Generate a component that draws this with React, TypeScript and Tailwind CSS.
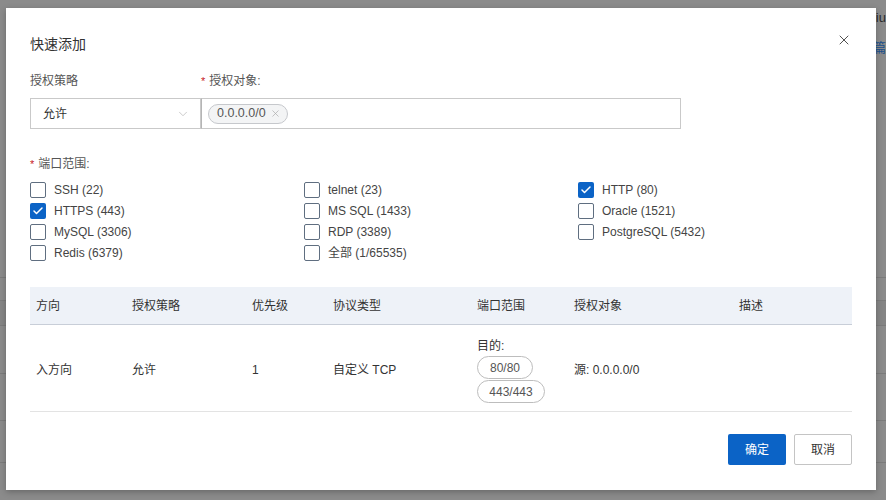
import { X, ChevronDown, Check } from "lucide-react";

const font = { fontFamily: '"Liberation Sans", "Noto Sans CJK SC", sans-serif' };

const ports: { label: string; checked?: boolean }[][] = [
  [{ label: "SSH (22)" }, { label: "telnet (23)" }, { label: "HTTP (80)", checked: true }],
  [{ label: "HTTPS (443)", checked: true }, { label: "MS SQL (1433)" }, { label: "Oracle (1521)" }],
  [{ label: "MySQL (3306)" }, { label: "RDP (3389)" }, { label: "PostgreSQL (5432)" }],
  [{ label: "Redis (6379)" }, { label: "全部 (1/65535)" }],
];

const cols = [
  { title: "方向", w: "w-[96px]" },
  { title: "授权策略", w: "w-[120px]" },
  { title: "优先级", w: "w-[81px]" },
  { title: "协议类型", w: "w-[144px]" },
  { title: "端口范围", w: "w-[97px]" },
  { title: "授权对象", w: "w-[165px]" },
  { title: "描述", w: "flex-1" },
];

function Box({ checked }: { checked?: boolean }) {
  return checked ? (
    <span className="w-[16px] h-[16px] rounded-[2px] bg-[#0b63c6] flex items-center justify-center">
      <Check className="w-[12px] h-[12px] text-white" strokeWidth={3} />
    </span>
  ) : (
    <span className="w-[16px] h-[16px] rounded-[2px] border border-[#5f6e80] bg-white" />
  );
}

function Backdrop() {
  // the page behind the dimmed overlay
  return (
    <div className="w-full h-full flex flex-col">
      <div className="h-[277px]" />
      {[23, 25, 48, 47, 42, 38].map((h, i) => (
        <div key={i} className={`border-t border-[#7b7b7b] ${i === 1 ? "bg-[#858585]" : ""}`} style={{ height: h }} />
      ))}
    </div>
  );
}

export default function App() {
  return (
    <div className="relative w-[886px] h-[500px] overflow-hidden bg-[#8b8b8b]" style={font}>
      <Backdrop />
      <div className="absolute right-0 top-[8px] text-[13px] text-[#2a2a2a] leading-[20px]">liu</div>
      <div className="absolute right-0 top-[38px] text-[13px] text-[#1c4f8a] leading-[20px]">篇</div>

      <div className="absolute left-[6px] top-[8px] w-[870px] h-[482px] bg-white shadow-[0_2px_6px_rgba(0,0,0,0.25)] px-[24px] pt-[26px] flex flex-col text-[12px] text-[#333]">
        <div className="h-[20px] leading-[20px] text-[14px] text-[#333]">快速添加</div>
        <button className="absolute right-[24px] top-[24px] text-[#444]">
          <X className="w-[16px] h-[16px]" strokeWidth={1.4} />
        </button>

        <div className="mt-[17px] flex h-[20px] leading-[20px] text-[#555]">
          <div className="w-[171px]">授权策略</div>
          <div className="flex items-center">
            <span className="text-[#c7161e] mr-[4px] text-[11px]">*</span>授权对象:
          </div>
        </div>

        <div className="mt-[7px] flex h-[31px]">
          <div className="w-[171px] border border-[#c9c9c9] flex items-center justify-between pl-[12px] pr-[10px] text-[#333]">
            <span>允许</span>
            <ChevronDown className="w-[14px] h-[14px] text-[#b5b5b5]" strokeWidth={1.2} />
          </div>
          <div className="w-[480px] border border-[#c9c9c9] border-l-[#b5b5b5] flex items-center pl-[6px]">
            <span className="h-[20px] rounded-full border border-[#c6c8cc] bg-[#f3f4f5] flex items-center pl-[8px] pr-[6px] gap-[4px] text-[12.5px] text-[#555]">
              0.0.0.0/0
              <X className="w-[11px] h-[11px] text-[#aaa]" strokeWidth={1.5} />
            </span>
          </div>
        </div>

        <div className="mt-[25px] h-[20px] leading-[20px] flex items-center text-[#555]">
          <span className="text-[#c7161e] mr-[4px] text-[11px]">*</span>端口范围:
        </div>

        <div className="mt-[5px] flex flex-col">
          {ports.map((row, r) => (
            <div key={r} className="grid grid-cols-3 h-[21px]">
              {row.map((p) => (
                <label key={p.label} className="flex items-center gap-[8px] text-[#444]">
                  <Box checked={p.checked} />
                  <span>{p.label}</span>
                </label>
              ))}
            </div>
          ))}
        </div>

        <div className="mt-[24px] flex flex-col">
          <div className="flex h-[38px] bg-[#eef2f8] border-b border-[#c8ced8] items-center text-[#333]">
            {cols.map((c) => (
              <div key={c.title} className={`${c.w} pl-[6px]`}>{c.title}</div>
            ))}
          </div>
          <div className="flex h-[87px] pt-[4px] border-b border-[#e3e3e3] items-center text-[#333]">
            <div className="w-[96px] pl-[6px]">入方向</div>
            <div className="w-[120px] pl-[6px]">允许</div>
            <div className="w-[81px] pl-[6px]">1</div>
            <div className="w-[144px] pl-[6px]">自定义 TCP</div>
            <div className="w-[97px] pl-[6px] flex flex-col items-start">
              <div className="leading-[18px]">目的:</div>
              <span className="mt-[1px] w-[56px] h-[23px] rounded-full border border-[#bdbdbd] flex items-center justify-center text-[#555]">80/80</span>
              <span className="mt-[1px] w-[68px] h-[23px] rounded-full border border-[#bdbdbd] flex items-center justify-center text-[#555]">443/443</span>
            </div>
            <div className="w-[165px] pl-[6px]">源: 0.0.0.0/0</div>
            <div className="flex-1" />
          </div>
        </div>

        <div className="mt-[22px] flex justify-end gap-[8px]">
          <button className="w-[58px] h-[31px] bg-[#0b63c6] text-white rounded-[2px]">确定</button>
          <button className="w-[58px] h-[31px] border border-[#c4c4c4] text-[#333] rounded-[2px] bg-white">取消</button>
        </div>
      </div>
    </div>
  );
}
